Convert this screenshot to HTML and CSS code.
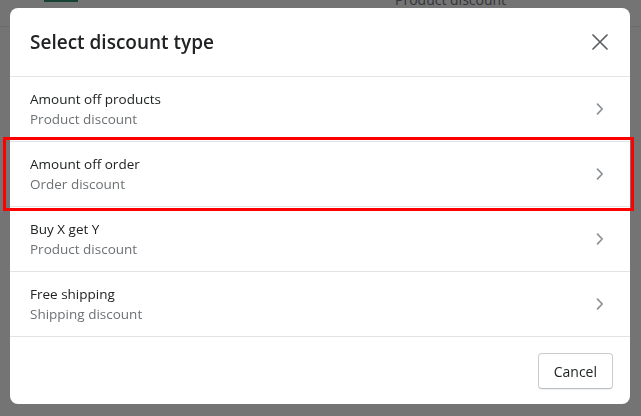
FILE: index.html
```html
<!DOCTYPE html>
<html lang="en">
<head>
    <meta charset="UTF-8">
    <meta name="viewport" content="width=device-width, initial-scale=1.0">
    <title>Select discount type</title>
    <link rel="stylesheet" href="styles.css">
</head>
<body>
    <div class="page">
        <div class="page-top">
            <div class="page-thumb"></div>
            <div class="page-sub">Product discount</div>
        </div>
    </div>

    <div class="backdrop"></div>

    <div class="modal">
        <div class="modal-header">
            <h2 class="modal-title">Select discount type</h2>
            <button class="modal-close" aria-label="Close">
                <svg width="18" height="18" viewBox="0 0 18 18">
                    <path d="M2 2 L16 16 M16 2 L2 16" stroke="#5c5f62" stroke-width="1.7" stroke-linecap="round" fill="none"/>
                </svg>
            </button>
        </div>
        <ul class="option-list">
            <li class="option">
                <div class="option-text">
                    <div class="option-name">Amount off products</div>
                    <div class="option-kind">Product discount</div>
                </div>
                <svg class="chevron" width="8" height="12" viewBox="0 0 8 12">
                    <path d="M1.5 1.2 L6.2 6 L1.5 10.8" stroke="#8c9196" stroke-width="1.7" stroke-linecap="round" stroke-linejoin="round" fill="none"/>
                </svg>
            </li>
            <li class="option">
                <div class="option-text">
                    <div class="option-name">Amount off order</div>
                    <div class="option-kind">Order discount</div>
                </div>
                <svg class="chevron" width="8" height="12" viewBox="0 0 8 12">
                    <path d="M1.5 1.2 L6.2 6 L1.5 10.8" stroke="#8c9196" stroke-width="1.7" stroke-linecap="round" stroke-linejoin="round" fill="none"/>
                </svg>
            </li>
            <li class="option">
                <div class="option-text">
                    <div class="option-name">Buy X get Y</div>
                    <div class="option-kind">Product discount</div>
                </div>
                <svg class="chevron" width="8" height="12" viewBox="0 0 8 12">
                    <path d="M1.5 1.2 L6.2 6 L1.5 10.8" stroke="#8c9196" stroke-width="1.7" stroke-linecap="round" stroke-linejoin="round" fill="none"/>
                </svg>
            </li>
            <li class="option">
                <div class="option-text">
                    <div class="option-name">Free shipping</div>
                    <div class="option-kind">Shipping discount</div>
                </div>
                <svg class="chevron" width="8" height="12" viewBox="0 0 8 12">
                    <path d="M1.5 1.2 L6.2 6 L1.5 10.8" stroke="#8c9196" stroke-width="1.7" stroke-linecap="round" stroke-linejoin="round" fill="none"/>
                </svg>
            </li>
        </ul>
        <div class="modal-footer">
            <button class="btn">Cancel</button>
        </div>
    </div>

    <!-- highlight around the selected row -->
    <div class="highlight"></div>
</body>
</html>
```

FILE: styles.css
```css
body {
    margin: 0;
    padding: 0;
    background-color: #f6f6f7;
    font-family: "Open Sans", "Noto Sans", sans-serif;
    color: #202223;
    overflow: hidden;
    height: 416px;
}
.page-top {
    height: 26px;
    border-bottom: 1px solid #e1e3e5;
    display: flex;
    align-items: flex-start;
    overflow: hidden;
}
.page-thumb {
    width: 34px;
    height: 2px;
    margin-left: 44px;
    background-color: #2f8f6f;
}
.page-sub {
    margin-left: 317px;
    margin-top: -10px;
    font-size: 14px;
    line-height: 20px;
    color: #6d7175;
}

.backdrop {
    position: fixed;
    top: 0;
    left: 0;
    right: 0;
    bottom: 0;
    background: rgba(0, 0, 0, 0.53);
}

.modal {
    position: fixed;
    top: 8px;
    left: 10px;
    width: 620px;
    background: #fff;
    border-radius: 8px;
    overflow: hidden;
}
.modal-header {
    display: flex;
    align-items: center;
    justify-content: space-between;
    padding: 20px 20px 20px 20px;
    border-bottom: 1px solid #e1e3e5;
}
.modal-title {
    margin: 0;
    font-size: 19px;
    line-height: 28px;
    font-weight: 600;
    color: #202223;
}
.modal-close {
    background: none;
    border: none;
    padding: 0;
    margin-right: 1px;
    width: 18px;
    height: 18px;
    display: flex;
}

.option-list {
    list-style: none;
    margin: 0;
    padding: 0;
}
.option {
    display: flex;
    align-items: center;
    justify-content: space-between;
    height: 64px;
    padding: 0 26px 0 20px;
    box-sizing: content-box;
    border-bottom: 1px solid #e1e3e5;
}
.option-name,
.option-kind {
    font-size: 13.5px;
    line-height: 20px;
}
.option-kind {
    color: #6d7175;
}

.modal-footer {
    display: flex;
    justify-content: flex-end;
    padding: 16px 17px 15px 0;
}
.btn {
    height: 36px;
    padding: 0 15px;
    font-family: inherit;
    font-size: 14px;
    color: #202223;
    background: #fff;
    border: 1px solid #c9cccf;
    border-bottom-color: #babfc3;
    border-radius: 4px;
    box-shadow: 0 1px 0 rgba(0, 0, 0, 0.05);
}

.highlight {
    position: fixed;
    top: 137px;
    left: 3px;
    width: 625px;
    height: 68px;
    border: 3px solid #f00;
}
```
